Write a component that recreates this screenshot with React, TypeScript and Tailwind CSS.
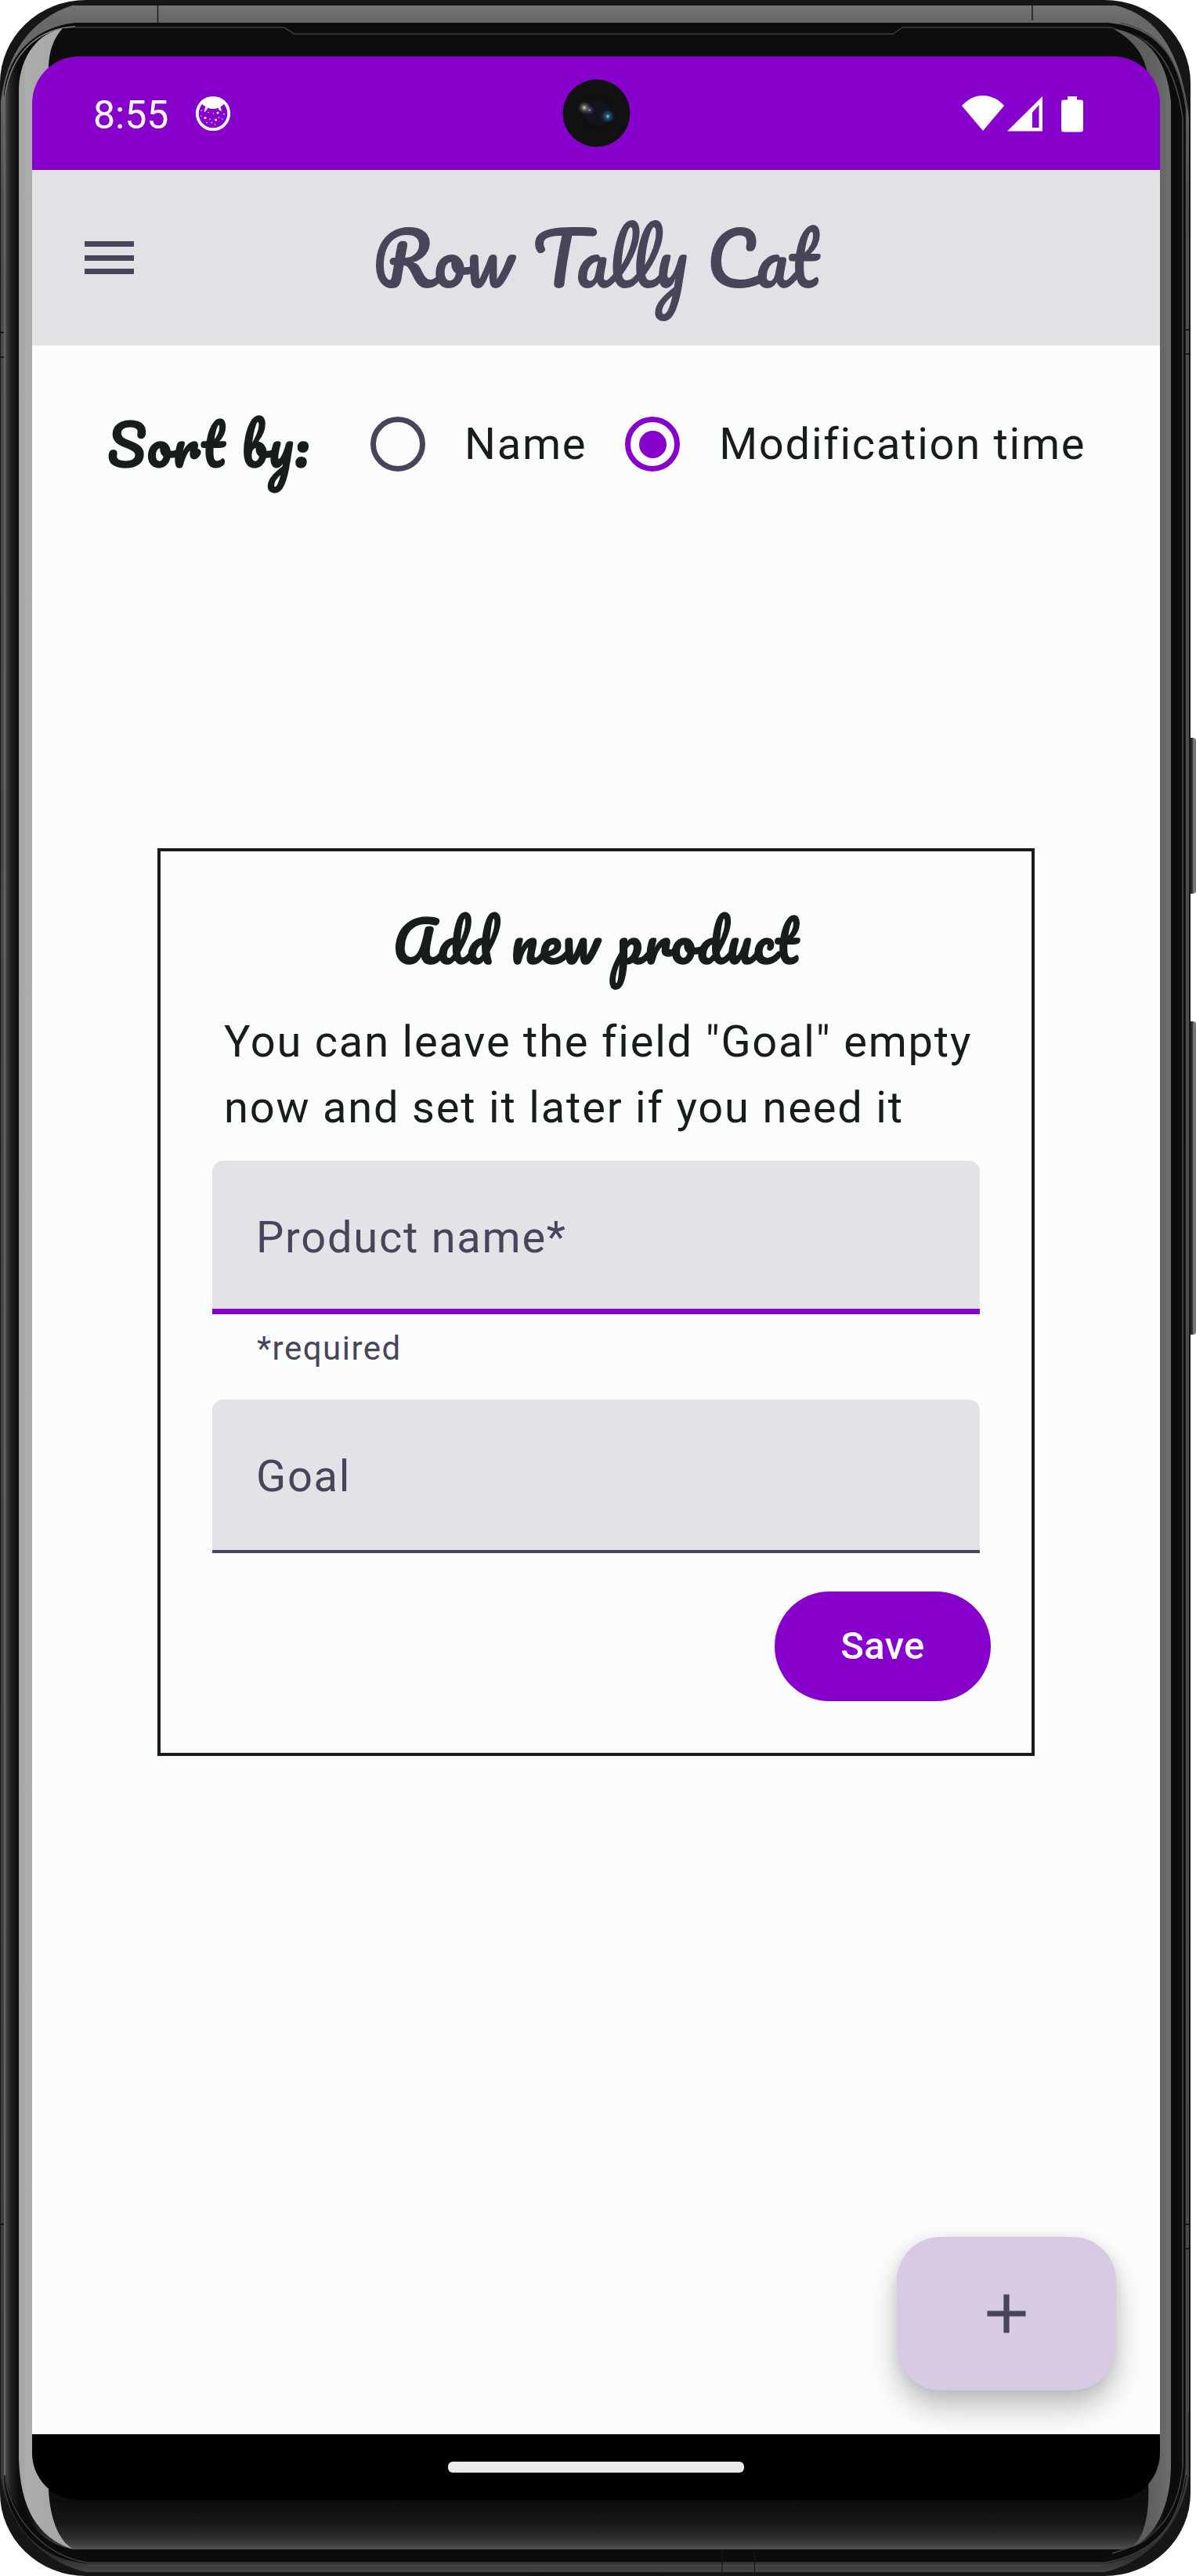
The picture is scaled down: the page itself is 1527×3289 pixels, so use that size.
import React from "react";

const SCRIPT =
  "font-['Pacifico',cursive] whitespace-nowrap [font-feature-settings:'liga','clig','calt']";
const HEAVY = "[-webkit-text-stroke:1.5px_#191c1c]";

function PhoneFrame() {
  return (
    <svg className="absolute inset-0" width="1527" height="3289" viewBox="0 0 1527 3289" fill="none">
      <defs>
        <linearGradient id="rim" x1="0" y1="0" x2="0" y2="3289" gradientUnits="userSpaceOnUse">
          <stop offset="0" stopColor="#141414" />
          <stop offset="0.0018" stopColor="#161616" />
          <stop offset="0.0022" stopColor="#727272" />
          <stop offset="0.008" stopColor="#686868" />
          <stop offset="0.03" stopColor="#6a6a6a" />
          <stop offset="0.08" stopColor="#4c4c4c" />
          <stop offset="0.96" stopColor="#3c3c3c" />
          <stop offset="0.993" stopColor="#2e2e2e" />
          <stop offset="0.998" stopColor="#444444" />
          <stop offset="1" stopColor="#222222" />
        </linearGradient>
        <linearGradient id="leftedge" x1="7" y1="0" x2="24" y2="0" gradientUnits="userSpaceOnUse">
          <stop offset="0" stopColor="#4a4a4a" />
          <stop offset="0.35" stopColor="#242424" />
          <stop offset="1" stopColor="#0c0c0c" />
        </linearGradient>
        <linearGradient id="glassL" x1="24" y1="0" x2="62" y2="0" gradientUnits="userSpaceOnUse">
          <stop offset="0" stopColor="#a2a2a2" />
          <stop offset="0.3" stopColor="#adadad" />
          <stop offset="1" stopColor="#a8a8a8" />
        </linearGradient>
        <linearGradient id="glassR" x1="1466" y1="0" x2="1495" y2="0" gradientUnits="userSpaceOnUse">
          <stop offset="0" stopColor="#5e5e5e" />
          <stop offset="1" stopColor="#6e6e6e" />
        </linearGradient>
        <linearGradient id="glassB" x1="0" y1="3192" x2="0" y2="3255" gradientUnits="userSpaceOnUse">
          <stop offset="0" stopColor="#0d0d0d" />
          <stop offset="0.45" stopColor="#161616" />
          <stop offset="0.8" stopColor="#303030" />
          <stop offset="1" stopColor="#525252" />
        </linearGradient>
        <linearGradient id="key" x1="1519" y1="0" x2="1527" y2="0" gradientUnits="userSpaceOnUse">
          <stop offset="0" stopColor="#1c1c1c" />
          <stop offset="0.4" stopColor="#303030" />
          <stop offset="0.65" stopColor="#858585" />
          <stop offset="1" stopColor="#666666" />
        </linearGradient>
      </defs>

      {/* side keys */}
      <rect x="1516" y="942" width="11" height="199" rx="4" fill="url(#key)" />
      <rect x="1516" y="1304" width="11" height="400" rx="4" fill="url(#key)" />

      {/* metal rim */}
      <rect x="0" y="0" width="1520" height="3289" rx="110" ry="106" fill="#161616" />
      <path
        d="M1 3160V130C8 68 40 24 92 7H1424C1480 20 1508 70 1518 150V3160C1510 3220 1470 3270 1410 3284H110C50 3270 8 3220 1 3160Z"
        fill="url(#rim)"
      />
      <path d="M201.500 7V29M1318 4V26" stroke="#1c1c1c" strokeWidth="1.500" />

      {/* glass body */}
      <path
        d="M5 3165V120C10 64 50 34 96 29H1412C1468 32 1506 66 1515 140V3160C1508 3220 1470 3266 1408 3273H112C46 3268 10 3220 5 3165Z"
        fill="#0c0c0c"
      />
      <path d="M7 3160V124C12 70 50 38 92 35L60 120V3240L92 3256C40 3240 12 3200 7 3160Z" fill="url(#leftedge)" />
      <path d="M6 3160V124C14 64 52 36 96 34" stroke="#858585" strokeWidth="1.500" />
      <path d="M1510 150V3150M1514.500 140V3160M1517 300V3080" stroke="#555555" strokeWidth="1.300" />
      <path d="M1420 36C1476 46 1500 84 1510 150M1430 29C1484 40 1506 80 1514.500 140" stroke="#4a4a4a" strokeWidth="1.500" />
      <path d="M1510 3150C1504 3210 1478 3244 1420 3260M1514.500 3150C1508 3220 1478 3260 1410 3272H112C60 3264 14 3220 6 3160" stroke="#3f3f3f" strokeWidth="1.500" />

      {/* front panel and its reflections */}
      <path d="M24 3140V112C26 70 50 42 80 36H1426C1464 44 1490 74 1495 130V3150C1494 3200 1476 3248 1432 3255H94C46 3240 26 3200 24 3140Z" fill="#0d0d0d" />
      <path d="M30 3192H1490C1486 3226 1468 3250 1432 3255H94C56 3248 36 3226 30 3192Z" fill="url(#glassB)" />
      <path d="M24 3140V112C26 70 50 42 80 36C66 52 61 70 62 100V3180C64 3214 74 3244 94 3255C46 3240 26 3200 24 3140Z" fill="url(#glassL)" />
      <path d="M1495 3150V130C1490 74 1464 44 1420 36C1442 48 1462 66 1466 100V3168C1468 3206 1462 3240 1445 3252C1476 3238 1494 3200 1495 3150Z" fill="url(#glassR)" />

      {/* speaker ridge */}
      <path d="M96 35H363L376 43.500H1140L1152 35H1420" stroke="#3c3c3c" strokeWidth="1.500" />
      <path d="M112 3276H1408" stroke="#4a4a4a" strokeWidth="1.500" />
      <path d="M922 3256V3288M963.500 3256V3288" stroke="#161616" strokeWidth="1.200" />
      <path d="M675 3289L686 3284H836L848 3289Z" fill="#141414" />
      <path d="M0 424.500H5M0 456H5M1514 421H1520M1514 452H1520M0 2840H5M1514 2840H1520M1514 2871H1520" stroke="#0a0a0a" strokeWidth="1.500" />
    </svg>
  );
}

function CatIcon() {
  return (
    <svg width="46" height="46" viewBox="0 0 46 46">
      <circle cx="23" cy="23" r="20.200" fill="none" stroke="#fff" strokeWidth="3.800" />
      <path d="M8 9C16 1 30 1 38 9L35 13L32.500 14L34 20L30.500 18.500L29.500 15.500C26 17.500 20 17.500 16.500 15.500L15.500 17.500L12.500 21L11.500 19.500L13.500 14L11 13Z" fill="#fff" />
      <g fill="#fff">
        <circle cx="29" cy="22" r="1.500" />
        <circle cx="13" cy="28.500" r="1.600" />
        <circle cx="26.500" cy="31" r="1.500" />
        <circle cx="17" cy="21.500" r=".7" />
        <circle cx="23.500" cy="23" r=".7" />
        <circle cx="37" cy="23.500" r=".8" />
        <circle cx="8" cy="19" r=".7" />
        <circle cx="8" cy="26" r=".7" />
        <circle cx="19" cy="30" r=".8" />
        <circle cx="30.500" cy="28" r=".8" />
        <circle cx="35" cy="30" r=".7" />
        <circle cx="15" cy="34.500" r=".8" />
        <circle cx="21.500" cy="34.500" r=".8" />
        <circle cx="25.500" cy="37" r=".8" />
      </g>
    </svg>
  );
}

function Camera() {
  return (
    <svg className="absolute left-[676.5px] top-[29px]" width="87" height="87" viewBox="0 0 87 87">
      <defs>
        <radialGradient id="lens" cx="50%" cy="50%" r="50%">
          <stop offset="0" stopColor="#14101a" />
          <stop offset="0.7" stopColor="#15131d" />
          <stop offset="1" stopColor="#0b0c10" />
        </radialGradient>
        <radialGradient id="flareA">
          <stop offset="0" stopColor="#e8ecdc" />
          <stop offset="0.3" stopColor="#7f8577" stopOpacity=".75" />
          <stop offset="1" stopColor="#30352d" stopOpacity="0" />
        </radialGradient>
        <radialGradient id="flareB">
          <stop offset="0" stopColor="#c8efff" />
          <stop offset="0.22" stopColor="#2c7aa8" stopOpacity=".8" />
          <stop offset="1" stopColor="#0c2b48" stopOpacity="0" />
        </radialGradient>
        <radialGradient id="flareC">
          <stop offset="0" stopColor="#e0a8e0" />
          <stop offset="0.3" stopColor="#5b4478" stopOpacity=".7" />
          <stop offset="1" stopColor="#1c2b48" stopOpacity="0" />
        </radialGradient>
      </defs>
      <circle cx="43.500" cy="43.500" r="43" fill="#101110" />
      <circle cx="43.500" cy="42.500" r="20.500" fill="url(#lens)" />
      <circle cx="58" cy="47.500" r="10" fill="url(#flareB)" />
      <circle cx="34.500" cy="39.500" r="7" fill="url(#flareC)" />
      <circle cx="28" cy="36.500" r="9" fill="url(#flareA)" />
    </svg>
  );
}

function StatusBar() {
  return (
    <div className="relative flex h-[145px] items-center bg-[#8800cb] pl-[78px] pr-[98px] text-white">
      <span className="pt-[4px] text-[50px] leading-[60px]">8:55</span>
      <div className="ml-[34px]">
        <CatIcon />
      </div>
      <Camera />
      <svg className="ml-auto" width="155" height="48" viewBox="0 0 155 48" fill="#fff">
        <path d="M0 14C15-3.500 39-3.500 54 14L27 46Z" />
        <path fillRule="evenodd" d="M103 2V46.500H58ZM98.500 13L90 22.500V42H98.500Z" />
        <path d="M135 2H147V6.500H152Q155 6.500 155 9.500V44.500Q155 47.500 152 47.500H130Q127 47.500 127 44.500V9.500Q127 6.500 130 6.500H135Z" />
      </svg>
    </div>
  );
}

function AppBar() {
  return (
    <header className="flex h-[224px] items-center bg-[#e2e1e6] pl-[67px] text-[#484459]">
      <div className="flex w-[63px] flex-col gap-[10.5px]">
        <span className="h-[7px] bg-[#484459]" />
        <span className="h-[7px] bg-[#484459]" />
        <span className="h-[7px] bg-[#484459]" />
      </div>
      <h1 className={`${SCRIPT} ml-[304px] text-[91px] leading-[120px]`}>Row Tally Cat</h1>
    </header>
  );
}

function Radio({ label, checked }: { label: string; checked?: boolean }) {
  return (
    <div className="flex items-center">
      <span
        className={
          "flex size-[70px] items-center justify-center rounded-full border-[7px] " +
          (checked ? "border-[#8800cb]" : "border-[#484459]")
        }
      >
        {checked && <span className="size-[35px] rounded-full bg-[#8800cb]" />}
      </span>
      <span className="ml-[50px] text-[56px] leading-[84px] tracking-[1.75px] whitespace-nowrap">{label}</span>
    </div>
  );
}

function Field({ label, active }: { label: string; active?: boolean }) {
  return (
    <div
      className={
        "flex h-[196px] items-center rounded-t-[14px] bg-[#e3e2e7] px-[56px] text-[56px] leading-[84px] tracking-[1.75px] text-[#484459] " +
        (active ? "border-b-[7px] border-[#8800cb] pt-[6px]" : "border-b-4 border-[#484459] pt-[3px]")
      }
    >
      {label}
    </div>
  );
}

export default function App() {
  return (
    <div className="relative h-[3289px] w-[1527px] overflow-hidden bg-white pl-[41px] pt-[72px] font-['Roboto',sans-serif] text-[#191c1c]">
      <PhoneFrame />
      <div className="relative flex h-[3120px] w-[1440px] flex-col overflow-hidden rounded-[60px]">
        <StatusBar />
        <AppBar />
        <main className="relative flex-1 bg-[#fbfdfc]">
          <div className="flex h-[252px] items-center pl-[96px]">
            <span className={`${SCRIPT} ${HEAVY} w-[336px] pt-[2px] text-[70px] leading-[100px] tracking-[1.75px]`}>Sort by:</span>
            <Radio label="Name" />
            <div className="ml-[49px]">
              <Radio label="Modification time" checked />
            </div>
          </div>
          <section className="ml-[160px] mt-[390px] flex h-[1159px] w-[1120px] flex-col border-4 border-[#191c1c] px-[66px] pt-[56px]">
            <h2 className={`${SCRIPT} ${HEAVY} mb-[28px] text-center text-[70px] leading-[117px] tracking-[1.8px]`}>Add new product</h2>
            <p className="pl-[15px] text-[56px] leading-[84px] tracking-[1.8px] whitespace-nowrap">
              You can leave the field "Goal" empty
              <br />
              now and set it later if you need it
            </p>
            <div className="mt-[26px]">
              <Field label="Product name*" active />
            </div>
            <p className="mt-[16px] pl-[57px] text-[42px] leading-[56px] tracking-[1.5px] text-[#484459]">*required</p>
            <div className="mt-[37px]">
              <Field label="Goal" />
            </div>
            <button className="-mr-[14px] mt-[49px] h-[140px] w-[276px] self-end rounded-full bg-[#8800cb] text-[49px] font-medium tracking-[.35px] text-white">
              Save
            </button>
          </section>
          <button className="absolute bottom-[56px] right-[56px] flex h-[196px] w-[280px] items-center justify-center rounded-[56px] bg-[#d8cae3] shadow-[0_22px_36px_rgba(0,0,0,0.24),0_2px_18px_rgba(0,0,0,0.08)]">
            <svg width="50" height="50" viewBox="0 0 50 50" stroke="#484459" strokeWidth="7.200">
              <path d="M25 .5V49.500M.5 25H49.500" />
            </svg>
          </button>
        </main>
        <nav className="flex h-[84px] items-center justify-center bg-black">
          <span className="h-[14px] w-[378px] rounded-[6px] bg-[#ebebeb]" />
        </nav>
      </div>
    </div>
  );
}
